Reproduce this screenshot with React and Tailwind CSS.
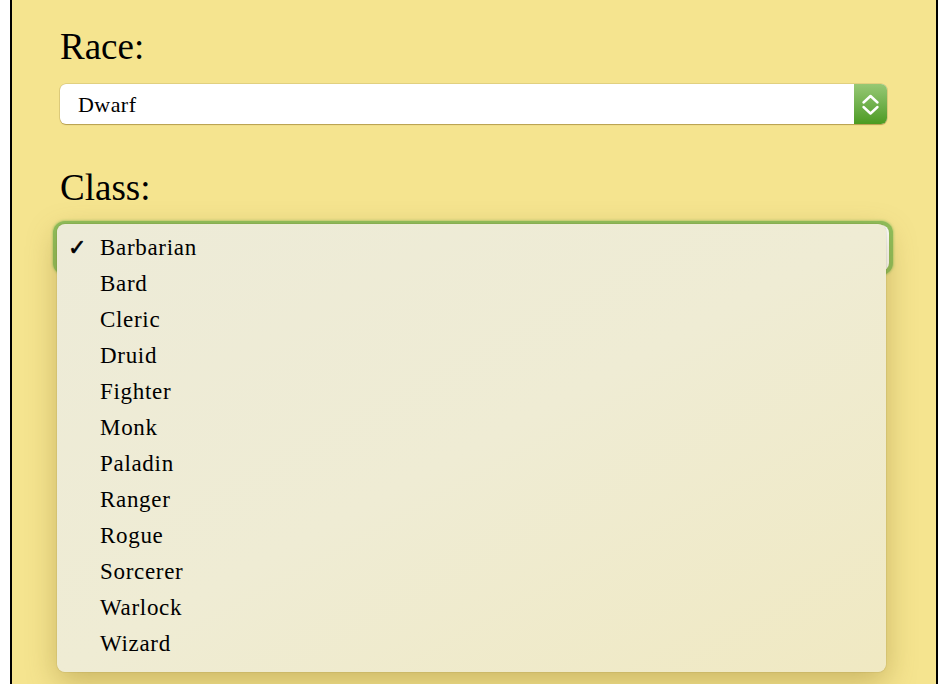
import React from "react";

const classes = [
  "Barbarian",
  "Bard",
  "Cleric",
  "Druid",
  "Fighter",
  "Monk",
  "Paladin",
  "Ranger",
  "Rogue",
  "Sorcerer",
  "Warlock",
  "Wizard",
];

const serif = { fontFamily: '"Liberation Serif", "Times New Roman", serif' };

function Chevrons() {
  return (
    <svg width="33" height="39" viewBox="0 0 33 39" fill="none">
      <path d="M9.5 17.5 L16.5 11 L23.5 17.5" stroke="white" strokeWidth="2.4" strokeLinecap="round" strokeLinejoin="round" />
      <path d="M9.5 22 L16.5 28.5 L23.5 22" stroke="white" strokeWidth="2.4" strokeLinecap="round" strokeLinejoin="round" />
    </svg>
  );
}

export default function App() {
  return (
    <div className="w-full min-h-screen bg-white overflow-hidden" style={serif}>
      <div className="relative mx-[10px] min-h-[684px] border-x-2 border-black bg-[#f5e48f] pl-[48px] pr-[49px] pt-[25px]">
        <div className="text-[37px] leading-[44px] text-black">Race:</div>
        <div className="mt-[15px] flex h-[40px] rounded-[6px] bg-white shadow-[0_1px_1px_rgba(150,120,40,0.55),0_0_0_0.5px_rgba(170,150,80,0.5)]">
          <div className="flex flex-1 items-center pl-[18px] text-[22px] tracking-[0.02em] text-black">Dwarf</div>
          <div className="flex w-[33px] items-center justify-center rounded-r-[6px] bg-gradient-to-b from-[#97c874] to-[#4b9b1f]">
            <Chevrons />
          </div>
        </div>
        <div className="mt-[42px] text-[37px] leading-[44px] text-black">Class:</div>
        <div className="mt-[15px] ml-[-3px] mr-[-2px] h-[46px] rounded-[8px] bg-white shadow-[0_0_0_4px_#8fbf5c,0_0_2px_5px_rgba(143,191,92,0.5)]"></div>

        <div className="absolute left-[45px] top-[224px] w-[829px] h-[448px] rounded-[8px] bg-gradient-to-br from-[#edebd8] via-[#efecd4] to-[#f0e9c2] shadow-[0_0_1px_rgba(80,60,0,0.6),0_10px_30px_rgba(120,95,20,0.35)] pt-[6px]">
          {classes.map((c, i) => (
            <div key={c} className="flex h-[36px] items-center text-[23px] tracking-[0.03em] text-black">
              <span className="w-[43px] pl-[11px] text-[22px] font-bold leading-none [-webkit-text-stroke:0.6px_black]" style={{ fontFamily: '"DejaVu Sans", sans-serif' }}>
                {i === 0 ? "✓" : ""}
              </span>
              <span>{c}</span>
            </div>
          ))}
        </div>
      </div>
    </div>
  );
}
